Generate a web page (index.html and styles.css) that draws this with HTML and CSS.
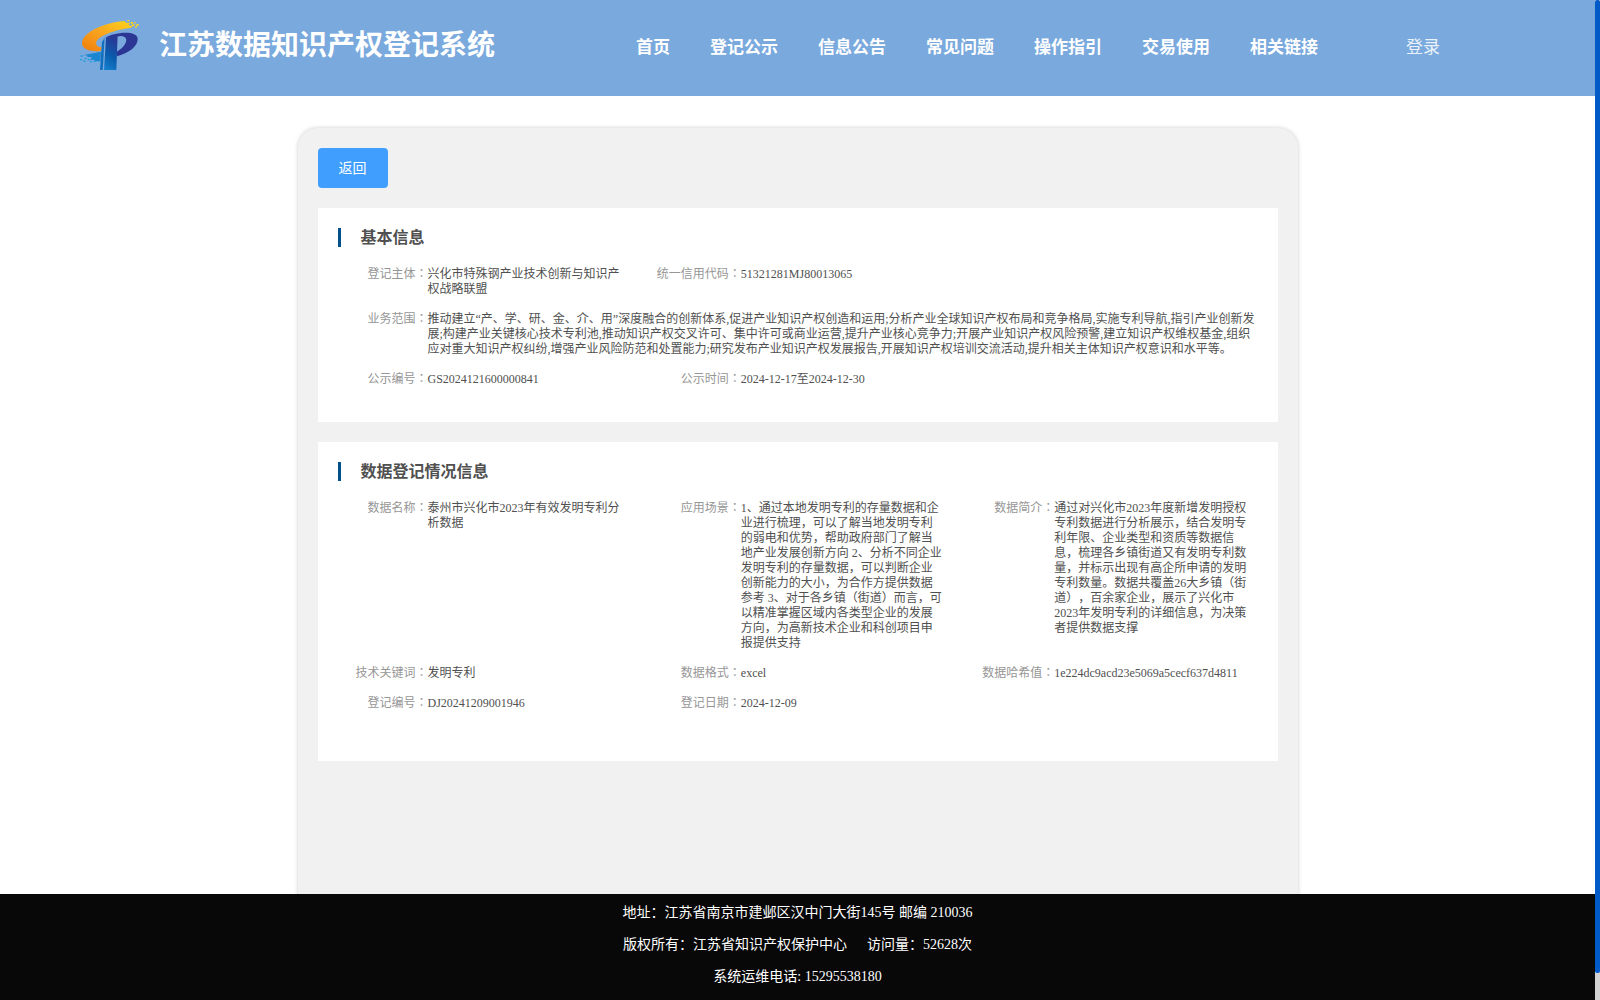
FILE: index.html
```html
<!DOCTYPE html>
<html lang="zh-CN">
<head>
    <meta charset="UTF-8">
    <meta name="viewport" content="width=device-width, initial-scale=1.0">
    <title>江苏数据知识产权登记系统</title>
    <link rel="stylesheet" href="styles.css">
</head>
<body>
    <div class="page">
        <header class="header">
            <svg class="logo" viewBox="0 0 240 210">
                <defs>
                    <linearGradient id="orange" x1="0" y1="1" x2="1" y2="0">
                        <stop offset="0" stop-color="#ef7d0c"/>
                        <stop offset="0.5" stop-color="#f9a51f"/>
                        <stop offset="1" stop-color="#fcd51c"/>
                    </linearGradient>
                    <linearGradient id="stem" x1="0" y1="1" x2="0.3" y2="0">
                        <stop offset="0" stop-color="#1583cf"/>
                        <stop offset="0.5" stop-color="#0a5cad"/>
                        <stop offset="1" stop-color="#273a97"/>
                    </linearGradient>
                </defs>
                <path fill="url(#orange)" d="M164 33 C105 37 36 66 36 100 C36 116 58 127 92 123 L96 112 C84 112 76 105 79 96 C86 77 130 60 184 53 L188 48 L176 45 L180 38 L168 38 Z"/>
                <path fill="#fcd51c" d="M172 30h6v4h-6zM182 36h7v5h-7zM192 36h5v4h-5zM186 43h7v5h-7zM199 42h7v5h-7zM195 49h6v4h-6z"/>
                <path fill="#1b86d1" d="M38 136 L93 125 L91 154 L78 154 L70 149 L60 150 L66 142 L53 141 L50 136 Z"/>
                <path fill="#1b9be0" d="M32 136h6v4h-6zM44 143h6v4h-6zM30 147h6v4h-6zM40 151h6v4h-6zM53 147h6v4h-6zM60 153h6v4h-6zM71 152h6v4h-6z"/>
                <path fill="#126fbd" d="M96 96 L104 83 L98 180 L90 180 Z"/>
                <path fill="#2c3695" d="M106 84 C125 68 203 58 203 87 C203 108 180 128 141 139 L141 125 C160 113 174 96 167 84 C162 77 151 76 141 80 Z"/>
                <path fill="url(#stem)" d="M108 84 L143 75 L139 180 L102 180 Z"/>
            </svg>
            <h1 class="site-title">江苏数据知识产权登记系统</h1>
            <nav class="nav">
                <a>首页</a>
                <a>登记公示</a>
                <a>信息公告</a>
                <a>常见问题</a>
                <a>操作指引</a>
                <a>交易使用</a>
                <a>相关链接</a>
            </nav>
            <a class="login">登录</a>
        </header>

        <main class="main">
            <div class="panel">
                <button class="btn-back">返回</button>

                <section class="card">
                    <h2 class="card-title">基本信息</h2>
                    <div class="info">
                        <div class="item">
                            <span class="label">登记主体</span>
                            <span class="value">兴化市特殊钢产业技术创新与知识产<br>权战略联盟</span>
                        </div>
                        <div class="item">
                            <span class="label">统一信用代码</span>
                            <span class="value">51321281MJ80013065</span>
                        </div>
                        <div class="item item-full">
                            <span class="label">业务范围</span>
                            <span class="value">推动建立“产、学、研、金、介、用”深度融合的创新体系,促进产业知识产权创造和运用;分析产业全球知识产权布局和竞争格局,实施专利导航,指引产业创新发<br>展;构建产业关键核心技术专利池,推动知识产权交叉许可、集中许可或商业运营,提升产业核心竞争力;开展产业知识产权风险预警,建立知识产权维权基金,组织<br>应对重大知识产权纠纷,增强产业风险防范和处置能力;研究发布产业知识产权发展报告,开展知识产权培训交流活动,提升相关主体知识产权意识和水平等。</span>
                        </div>
                        <div class="item">
                            <span class="label">公示编号</span>
                            <span class="value">GS2024121600000841</span>
                        </div>
                        <div class="item">
                            <span class="label">公示时间</span>
                            <span class="value">2024-12-17至2024-12-30</span>
                        </div>
                    </div>
                </section>

                <section class="card card-data">
                    <h2 class="card-title">数据登记情况信息</h2>
                    <div class="info">
                        <div class="item">
                            <span class="label">数据名称</span>
                            <span class="value">泰州市兴化市2023年有效发明专利分<br>析数据</span>
                        </div>
                        <div class="item">
                            <span class="label">应用场景</span>
                            <span class="value">1、通过本地发明专利的存量数据和企<br>业进行梳理，可以了解当地发明专利<br>的弱电和优势，帮助政府部门了解当<br>地产业发展创新方向 2、分析不同企业<br>发明专利的存量数据，可以判断企业<br>创新能力的大小，为合作方提供数据<br>参考 3、对于各乡镇（街道）而言，可<br>以精准掌握区域内各类型企业的发展<br>方向，为高新技术企业和科创项目申<br>报提供支持</span>
                        </div>
                        <div class="item">
                            <span class="label">数据简介</span>
                            <span class="value">通过对兴化市2023年度新增发明授权<br>专利数据进行分析展示，结合发明专<br>利年限、企业类型和资质等数据信<br>息，梳理各乡镇街道又有发明专利数<br>量，并标示出现有高企所申请的发明<br>专利数量。数据共覆盖26大乡镇（街<br>道），百余家企业，展示了兴化市<br>2023年发明专利的详细信息，为决策<br>者提供数据支撑</span>
                        </div>
                        <div class="item">
                            <span class="label">技术关键词</span>
                            <span class="value">发明专利</span>
                        </div>
                        <div class="item">
                            <span class="label">数据格式</span>
                            <span class="value">excel</span>
                        </div>
                        <div class="item">
                            <span class="label">数据哈希值</span>
                            <span class="value">1e224dc9acd23e5069a5cecf637d4811</span>
                        </div>
                        <div class="item">
                            <span class="label">登记编号</span>
                            <span class="value">DJ20241209001946</span>
                        </div>
                        <div class="item">
                            <span class="label">登记日期</span>
                            <span class="value">2024-12-09</span>
                        </div>
                    </div>
                </section>
            </div>
        </main>

        <footer class="footer">
            <p>地址：江苏省南京市建邺区汉中门大街145号 邮编 210036</p>
            <p>版权所有：江苏省知识产权保护中心<span class="visits">访问量：52628次</span></p>
            <p>系统运维电话: 15295538180</p>
        </footer>
    </div>
    <div class="scrollbar"><div class="thumb"></div></div>
</body>
</html>
```
FILE: styles.css
```css
* {
    margin: 0;
    padding: 0;
    box-sizing: border-box;
}

body {
    display: flex;
    height: 100vh;
    overflow: hidden;
    background: #fff;
    font-family: "Liberation Serif", "Noto Sans CJK SC", serif;
    text-spacing-trim: space-all;
}

.page {
    display: flex;
    flex-direction: column;
    flex: 1;
    min-width: 0;
}

/* Header */
.header {
    display: flex;
    flex: none;
    height: 96px;
    padding-left: 70px;
    background: #79a9dd;
    color: #fff;
    white-space: nowrap;
}

.logo {
    width: 80px;
    height: 70px;
    margin-top: 10px;
}

.site-title {
    width: 336px;
    margin-left: 9px;
    font-size: 28px;
    line-height: 92px;
}

.nav {
    display: flex;
    gap: 40px;
    margin-left: 141px;
    font-size: 17px;
    font-weight: bold;
    line-height: 96px;
}

.login {
    margin-left: 88px;
    font-size: 17px;
    line-height: 96px;
    opacity: 0.85;
}

/* Content */
.main {
    display: flex;
    flex: 1;
    justify-content: center;
    min-height: 0;
    padding-top: 32px;
    overflow: hidden;
}

.panel {
    width: 1000px;
    height: 900px;
    padding: 20px;
    background: #f1f1f1;
    border-radius: 20px;
    box-shadow: 0 0 4px rgba(0, 0, 0, 0.2);
}

.btn-back {
    display: block;
    width: 70px;
    height: 40px;
    padding-bottom: 2px;
    border: none;
    border-radius: 4px;
    background: #409eff;
    color: #fff;
    font-family: inherit;
    font-size: 14px;
}

.card {
    height: 214px;
    margin-top: 20px;
    padding: 20px 0 0 20px;
    background: #fff;
}

.card-data {
    height: 319px;
}

.card-title {
    height: 19px;
    padding-left: 20px;
    border-left: 3px solid #00508e;
    color: #505050;
    font-size: 16px;
    line-height: 20px;
}

.info {
    display: grid;
    grid-template-columns: repeat(3, 1fr);
    row-gap: 15px;
    margin-top: 20px;
    font-size: 12px;
    line-height: 15px;
    white-space: nowrap;
}

.item {
    display: flex;
    min-width: 0;
}

.item-full {
    grid-column: 1 / -1;
}

.label {
    flex: none;
    width: 90px;
    color: #969696;
    text-align: right;
}

/* centred full-width colon */
.label::after {
    content: "：";
    font-family: "Noto Sans CJK TC", sans-serif;
    font-feature-settings: "locl" 0;
    line-height: 1;
}

.value {
    color: #505050;
}

/* Footer */
.footer {
    flex: none;
    height: 106px;
    padding-top: 3px;
    background: #080808;
    color: #fff;
    font-size: 14px;
    line-height: 32px;
    text-align: center;
}

.visits {
    margin-left: 20px;
}

/* Scrollbar */
.scrollbar {
    width: 5px;
    background: #d2d2d2;
}

.thumb {
    height: 973px;
    border-radius: 2px;
    background: #005bc8;
}
```
